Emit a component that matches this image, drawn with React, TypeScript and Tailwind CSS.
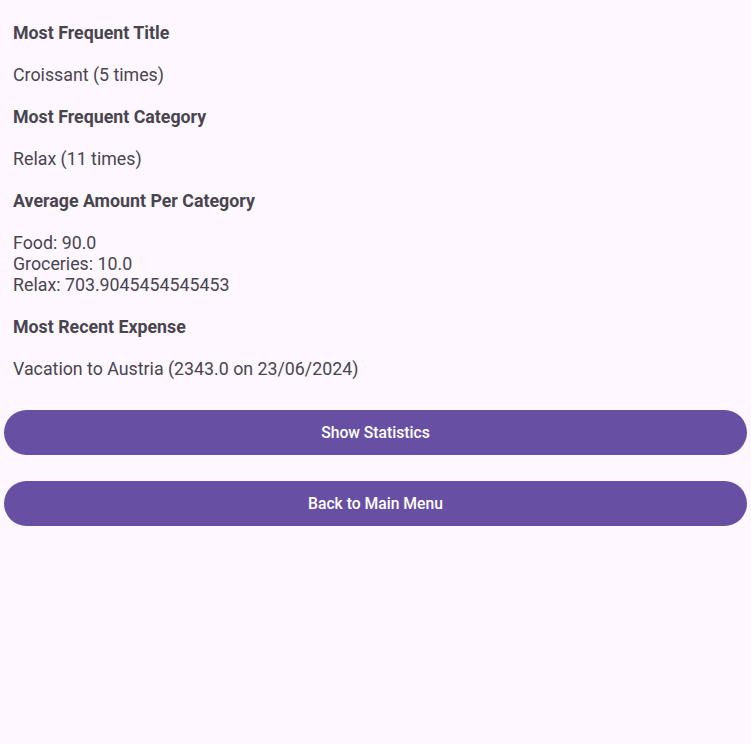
const averages = [
  { category: "Food", amount: "90.0" },
  { category: "Groceries", amount: "10.0" },
  { category: "Relax", amount: "703.9045454545453" },
];

function Section({ title, children }: { title: string; children: React.ReactNode }) {
  return (
    <div className="flex flex-col gap-[21px]">
      <h2 className="font-bold">{title}</h2>
      <div>{children}</div>
    </div>
  );
}

export default function App() {
  return (
    <div
      className="min-h-[744px] w-full bg-[#fef7ff] text-[17.8px] leading-[21px] text-[#49454f]"
      style={{ fontFamily: "Roboto, 'Liberation Sans', sans-serif" }}
    >
      <div className="flex flex-col gap-[21px] px-[13px] pt-[22px]">
        <Section title="Most Frequent Title">Croissant (5 times)</Section>
        <Section title="Most Frequent Category">Relax (11 times)</Section>
        <Section title="Average Amount Per Category">
          {averages.map((a) => (
            <p key={a.category}>
              {a.category}: {a.amount}
            </p>
          ))}
        </Section>
        <Section title="Most Recent Expense">Vacation to Austria (2343.0 on 23/06/2024)</Section>
      </div>

      <div className="mt-[31px] flex flex-col gap-[26px] px-[4px]">
        <button className="h-[45px] w-full rounded-full bg-[#6750a4] text-[15.7px] font-medium text-white">
          Show Statistics
        </button>
        <button className="h-[45px] w-full rounded-full bg-[#6750a4] text-[15.7px] font-medium text-white">
          Back to Main Menu
        </button>
      </div>
    </div>
  );
}
